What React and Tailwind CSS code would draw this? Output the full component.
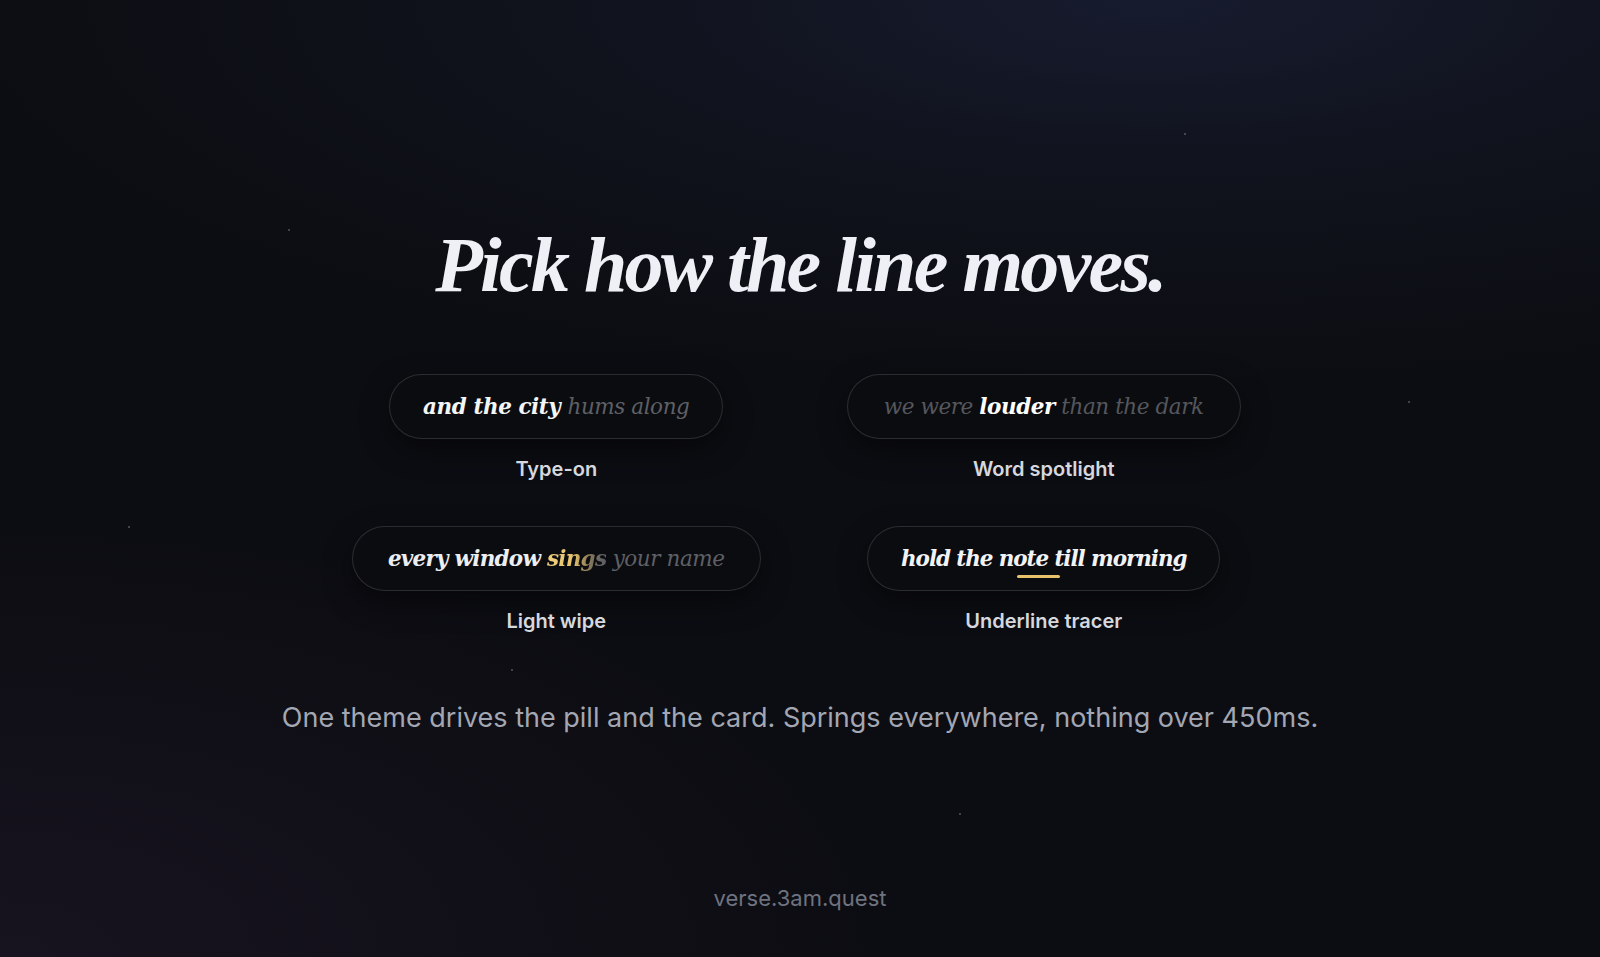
import React from "react";

const serif = "font-['DejaVu_Serif',serif]";
const headSerif = "font-['Liberation_Serif',serif]";
const sans = "font-['Inter','Liberation_Sans',sans-serif]";

function Pill({ children, w }) {
  return (
    <div
      className={`flex h-[65px] items-center justify-center rounded-full border border-white/[0.13] bg-[#0b0c10] shadow-[0_10px_30px_rgba(0,0,0,0.45)] ${w}`}
    >
      <div className={`${serif} italic text-[21.5px] leading-none tracking-[-0.02em] whitespace-nowrap`}>{children}</div>
    </div>
  );
}

function Option({ pill, label }) {
  return (
    <div className="flex flex-col items-center">
      {pill}
      <div className={`${sans} mt-4 text-[20px] leading-[28px] font-semibold text-[#d6d8de]`}>{label}</div>
    </div>
  );
}

const stars = [
  "left-[288px] top-[229px]",
  "left-[1184px] top-[133px]",
  "left-[1408px] top-[401px]",
  "left-[128px] top-[526px]",
  "left-[511px] top-[669px]",
  "left-[959px] top-[813px]",
];

export default function App() {
  return (
    <div className="relative h-[957px] w-full overflow-hidden bg-[radial-gradient(ellipse_75%_40%_at_72%_0%,#161b2e_0%,rgba(20,24,38,0.55)_45%,transparent_100%),radial-gradient(ellipse_55%_45%_at_0%_100%,#17131f_0%,transparent_100%),linear-gradient(#0c0d12,#0c0d12)]">
      {stars.map((s, i) => (
        <div key={i} className={`absolute h-[2px] w-[2px] rounded-full bg-white/30 ${s}`} />
      ))}
      <div className="relative flex flex-col items-center pt-[227px]">
        <h1 className={`${headSerif} italic font-bold text-[78px] leading-[76px] tracking-[-0.035em] text-[#eef0f5]`}>
          Pick how the line moves.
        </h1>
        <div className="mt-[71px] grid w-[975px] grid-cols-2 gap-y-[43px]">
          <Option
            label="Type-on"
            pill={
              <Pill w="w-[334px]">
                <span className="font-bold text-[#f4f5f7]">and the city </span>
                <span className="text-[#5e6066]">hums along</span>
              </Pill>
            }
          />
          <Option
            label="Word spotlight"
            pill={
              <Pill w="w-[394px]">
                <span className="text-[#55575d]">we were </span>
                <span className="font-bold text-white">louder</span>
                <span className="text-[#55575d]"> than the dark</span>
              </Pill>
            }
          />
          <Option
            label="Light wipe"
            pill={
              <Pill w="w-[409px]">
                <span className="font-bold tracking-[-0.035em] text-[#eceef2]">every window </span>
                <span className="bg-[linear-gradient(90deg,#f0d07e_0%,#e6c26a_45%,#8a7a58_70%,#5e6066_95%)] bg-clip-text font-bold tracking-[-0.035em] text-transparent">sings</span>
                <span className="text-[#5e6066]"> your name</span>
              </Pill>
            }
          />
          <Option
            label="Underline tracer"
            pill={
              <Pill w="w-[353px]">
                <span className="font-bold tracking-[-0.05em] text-[#f2f3f6]">
                  hold the{" "}
                  <span className="relative">
                    note
                    <span className="absolute left-[18px] w-[43px] -bottom-[7px] h-[3px] rounded-full bg-[#e8c26a]" />
                  </span>{" "}
                  till morning
                </span>
              </Pill>
            }
          />
        </div>
        <p className={`${sans} mt-[65px] text-[27px] leading-[36px] text-[#a3a7b3]`}>
          One theme drives the pill and the card. Springs everywhere, nothing over 450ms.
        </p>
        <p className={`${sans} mt-[148px] text-[22px] leading-[28px] text-[#6f7380]`}>verse.3am.quest</p>
      </div>
    </div>
  );
}
